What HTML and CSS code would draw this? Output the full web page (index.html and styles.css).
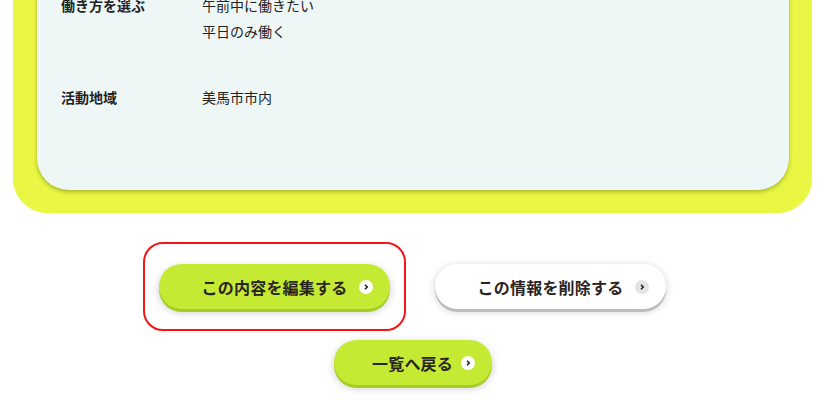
FILE: index.html
```html
<!DOCTYPE html>
<html lang="ja">
<head>
  <meta charset="UTF-8">
  <meta name="viewport" content="width=device-width, initial-scale=1.0">
  <title>登録内容の確認</title>
  <link rel="stylesheet" href="styles.css">
</head>
<body>
  <!-- Detail panel -->
  <div class="frame">
    <div class="panel">
      <dl class="row">
        <dt>働き方を選ぶ</dt>
        <dd>
          <span>午前中に働きたい</span>
          <span>平日のみ働く</span>
        </dd>
      </dl>
      <dl class="row">
        <dt>活動地域</dt>
        <dd><span>美馬市市内</span></dd>
      </dl>
    </div>
  </div>

  <!-- Actions -->
  <div class="actions">
    <div class="actions-row">
      <a class="btn btn-green btn-wide focus-mark" href="#">この内容を編集する
        <svg class="arrow" viewBox="0 0 14 14"><circle cx="7" cy="7" r="7" fill="#fff"/><path d="M6 4.8 8.2 7 6 9.2" fill="none" stroke="#222" stroke-width="1.6"/></svg>
      </a>
      <a class="btn btn-white btn-wide" href="#">この情報を削除する
        <svg class="arrow" viewBox="0 0 14 14"><circle cx="7" cy="7" r="7" fill="#e4e4e4"/><path d="M6 4.8 8.2 7 6 9.2" fill="none" stroke="#222" stroke-width="1.6"/></svg>
      </a>
    </div>
    <div class="actions-row">
      <a class="btn btn-green btn-back" href="#">一覧へ戻る
        <svg class="arrow" viewBox="0 0 14 14"><circle cx="7" cy="7" r="7" fill="#fff"/><path d="M6 4.8 8.2 7 6 9.2" fill="none" stroke="#222" stroke-width="1.6"/></svg>
      </a>
    </div>
  </div>
</body>
</html>
```

FILE: styles.css
```css
/* General Styles */
body {
  margin: 0;
  padding: 0;
  background: #fff;
  color: #222;
  font-family: "Noto Sans CJK JP", "Noto Sans", sans-serif;
  overflow: hidden;
}

/* Yellow frame + inner panel */
.frame {
  margin: -40px 13px 0;
  padding: 0 23px 23px 24px;
  background: #e9f744;
  border-radius: 0 0 34px 34px;
}

.panel {
  background: #eef7f6;
  border-radius: 0 0 32px 32px;
  box-shadow: 0 2px 4px rgba(90, 100, 0, 0.45);
  padding: 32px 24px 80px;
  display: flex;
  flex-direction: column;
  gap: 40px;
}

.row {
  display: grid;
  grid-template-columns: 141px 1fr;
  margin: 0;
  font-size: 14px;
  line-height: 26px;
}

.row dt {
  font-weight: 700;
}

.row dd {
  margin: 0;
  display: flex;
  flex-direction: column;
}

/* Buttons */
.actions {
  display: flex;
  flex-direction: column;
  align-items: center;
  gap: 31px;
  padding: 51px 0 40px;
}

.actions-row {
  display: flex;
  gap: 45px;
}

.btn {
  position: relative;
  display: flex;
  align-items: center;
  justify-content: center;
  height: 45px;
  border-radius: 24px;
  font-size: 16px;
  font-weight: 700;
  color: #2a241f;
  text-decoration: none;
  letter-spacing: 0.2px;
}

.btn-wide {
  width: 231px;
}

.btn-back {
  width: 158px;
}

.btn-green {
  background: #c4ea34;
  box-shadow: 0 3px 0 #a6cc2a, 0 3px 8px rgba(0, 0, 0, 0.22);
}

.btn-white {
  background: #fff;
  box-shadow: 0 3px 0 #bdbdbd, 0 2px 9px rgba(0, 0, 0, 0.2);
}

.arrow {
  position: absolute;
  right: 17px;
  top: 16px;
  width: 14px;
  height: 14px;
}

/* Red annotation around the edit button */
.focus-mark::after {
  content: "";
  position: absolute;
  top: -22px;
  left: -16px;
  right: -16px;
  bottom: -22px;
  border: 2px solid #f51515;
  border-radius: 20px;
}
```
